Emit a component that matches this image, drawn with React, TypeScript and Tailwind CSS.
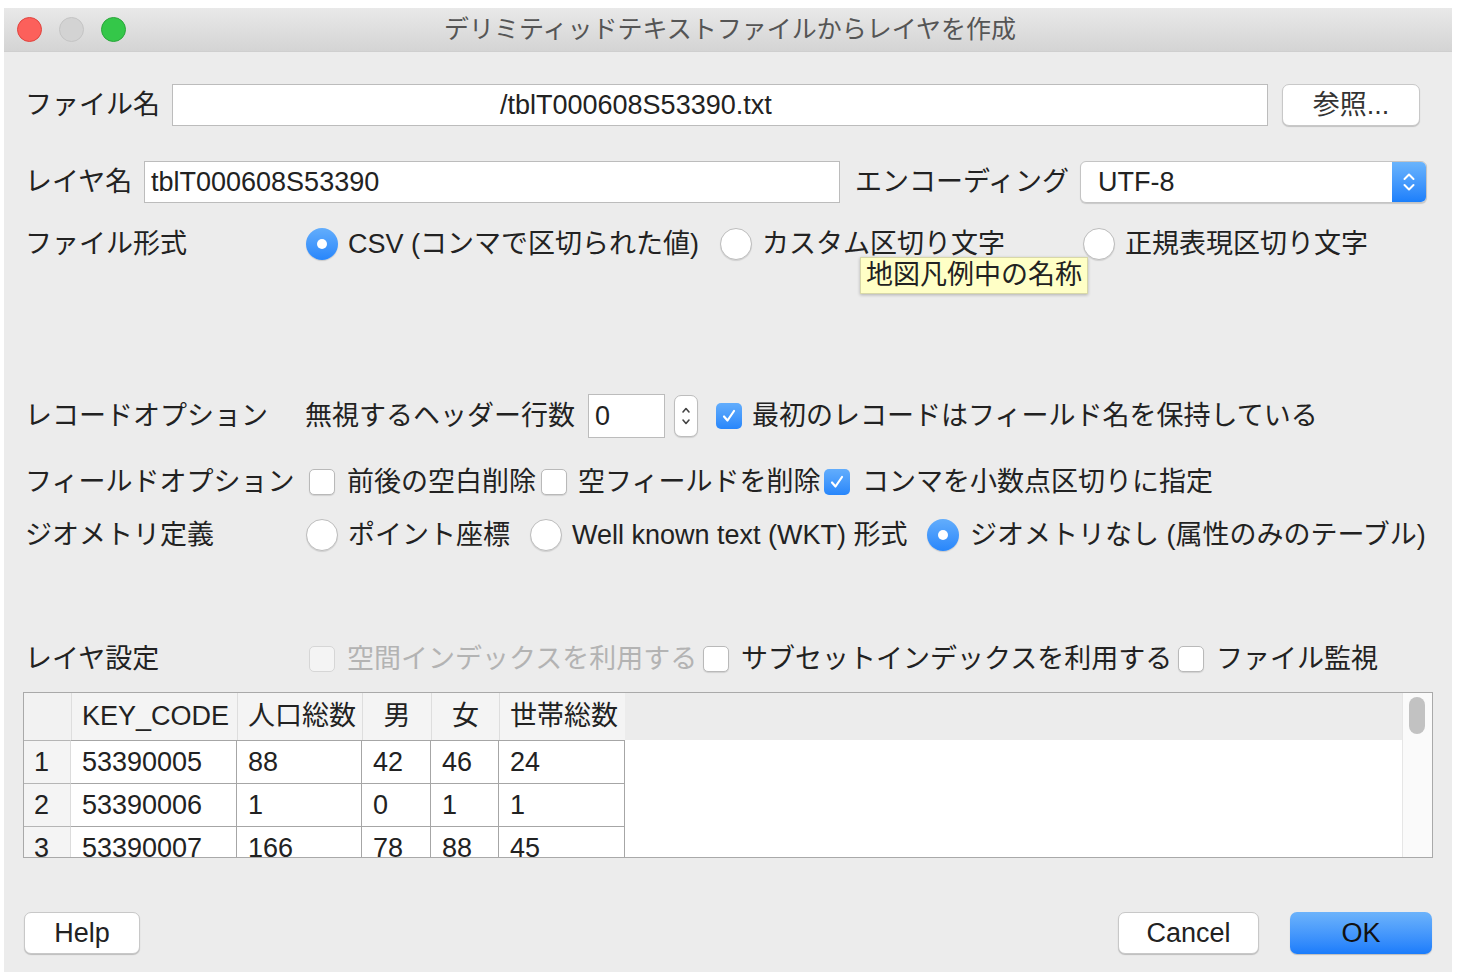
import React from 'react';

function Radio({ checked }: { checked?: boolean }) {
  if (checked) {
    return (
      <span className="w-[32px] h-[32px] rounded-full bg-linear-to-b from-[#62adfc] to-[#2786fb] flex items-center justify-center shrink-0 shadow-[0_1px_1px_rgba(0,0,0,0.15)]">
        <span className="w-[10px] h-[10px] rounded-full bg-white" />
      </span>
    );
  }
  return (
    <span className="w-[32px] h-[32px] rounded-full bg-white border border-[#bdbdbd] shrink-0 shadow-[0_1px_1px_rgba(0,0,0,0.12)]" />
  );
}

function Check({ checked, disabled }: { checked?: boolean; disabled?: boolean }) {
  if (checked) {
    return (
      <span className="w-[26px] h-[26px] rounded-[5px] bg-linear-to-b from-[#62adfc] to-[#2786fb] flex items-center justify-center shrink-0">
        <svg width="18" height="18" viewBox="0 0 18 18">
          <path d="M4 9.5 L7.5 13.5 L14 4" fill="none" stroke="white" strokeWidth="2.2" strokeLinecap="round" strokeLinejoin="round" />
        </svg>
      </span>
    );
  }
  return (
    <span
      className={
        disabled
          ? 'w-[26px] h-[26px] rounded-[5px] bg-[#f4f4f4] border border-[#d6d6d6] shrink-0'
          : 'w-[26px] h-[26px] rounded-[5px] bg-white border border-[#b9b9b9] shrink-0 shadow-[0_1px_1px_rgba(0,0,0,0.12)]'
      }
    />
  );
}

const cols = [
  { w: 'w-[166px]', h: 'KEY_CODE', center: false },
  { w: 'w-[125px]', h: '人口総数', center: false },
  { w: 'w-[69px]', h: '男', center: true },
  { w: 'w-[68px]', h: '女', center: true },
  { w: 'w-[126px]', h: '世帯総数', center: false },
];

const rows = [
  ['1', '53390005', '88', '42', '46', '24'],
  ['2', '53390006', '1', '0', '1', '1'],
  ['3', '53390007', '166', '78', '88', '45'],
];

export default function App() {
  return (
    <div className="w-[1460px] h-[978px] bg-white pt-[8px] pl-[4px] font-['Liberation_Sans','Noto_Sans_CJK_JP',sans-serif] text-[27px] leading-none text-[#222]">
      <div className="relative w-[1448px] h-[964px] bg-[#ececec] flex flex-col">
        {/* Title bar */}
        <div className="relative h-[44px] shrink-0 bg-linear-to-b from-[#e9e9e9] to-[#d4d4d4] border-b border-[#cfcfcf] flex items-center justify-center">
          <div className="absolute left-[13px] top-[9px] flex gap-[17px]">
            <span className="w-[25px] h-[25px] rounded-full bg-[#fc605b] border border-[#e0443e]" />
            <span className="w-[25px] h-[25px] rounded-full bg-[#d3d3d3] border border-[#c4c4c4]" />
            <span className="w-[25px] h-[25px] rounded-full bg-[#34c749] border border-[#2aa63b]" />
          </div>
          <span className="text-[25px] text-[#555] ml-[4px]">デリミティッドテキストファイルからレイヤを作成</span>
        </div>

        {/* Body */}
        <div className="flex flex-col pl-[21px]">
          {/* Row 1 */}
          <div className="flex items-center h-[42px] mt-[32px]">
            <span className="w-[147px]">ファイル名</span>
            <div className="w-[1096px] h-[42px] bg-white border border-[#bcbcbc] flex items-center pl-[327px]">
              /tblT000608S53390.txt
            </div>
            <div className="ml-[14px] w-[138px] h-[42px] bg-white rounded-[7px] border border-[#c8c8c8] shadow-[0_1px_1px_rgba(0,0,0,0.18)] flex items-center justify-center text-[#333]">
              参照...
            </div>
          </div>

          {/* Row 2 */}
          <div className="flex items-center h-[42px] mt-[35px]">
            <span className="w-[119px]">レイヤ名</span>
            <div className="w-[696px] h-[42px] bg-white border border-[#bcbcbc] flex items-center pl-[6px]">tblT000608S53390</div>
            <span className="ml-[15px] w-[225px]">エンコーディング</span>
            <div className="w-[347px] h-[42px] bg-white rounded-[6px] border border-[#c4c4c4] shadow-[0_1px_1px_rgba(0,0,0,0.15)] flex items-center overflow-hidden">
              <span className="flex-1 pl-[17px]">UTF-8</span>
              <span className="w-[34px] h-full bg-linear-to-b from-[#6ab4fc] to-[#1b7ffb] flex items-center justify-center">
                <svg width="16" height="24" viewBox="0 0 16 24">
                  <path d="M3.5 9 L8 4.5 L12.5 9" fill="none" stroke="white" strokeWidth="2" strokeLinecap="round" strokeLinejoin="round" />
                  <path d="M3.5 15 L8 19.5 L12.5 15" fill="none" stroke="white" strokeWidth="2" strokeLinecap="round" strokeLinejoin="round" />
                </svg>
              </span>
            </div>
          </div>

          {/* Row 3 */}
          <div className="flex items-center h-[32px] mt-[25px]">
            <span className="w-[281px]">ファイル形式</span>
            <div className="w-[414px] flex items-center">
              <Radio checked />
              <span className="ml-[10px]">CSV (コンマで区切られた値)</span>
            </div>
            <div className="w-[363px] flex items-center">
              <Radio />
              <span className="ml-[10px]">カスタム区切り文字</span>
            </div>
            <div className="flex items-center">
              <Radio />
              <span className="ml-[10px]">正規表現区切り文字</span>
            </div>
          </div>

          {/* Row 4 */}
          <div className="flex items-center h-[44px] mt-[134px]">
            <span className="w-[280px]">レコードオプション</span>
            <span className="w-[283px]">無視するヘッダー行数</span>
            <div className="w-[77px] h-[44px] bg-white border border-[#bcbcbc] flex items-center pl-[6px]">0</div>
            <div className="ml-[9px] w-[24px] h-[42px] bg-white rounded-[7px] border border-[#bdbdbd] shadow-[0_1px_1px_rgba(0,0,0,0.12)] flex items-center justify-center">
              <svg width="12" height="30" viewBox="0 0 12 30">
                <path d="M3 11 L6 7.5 L9 11" fill="none" stroke="#444" strokeWidth="1.6" strokeLinecap="round" strokeLinejoin="round" />
                <path d="M3 19 L6 22.5 L9 19" fill="none" stroke="#444" strokeWidth="1.6" strokeLinecap="round" strokeLinejoin="round" />
              </svg>
            </div>
            <span className="ml-[18px]">
              <Check checked />
            </span>
            <span className="ml-[10px]">最初のレコードはフィールド名を保持している</span>
          </div>

          {/* Row 5 */}
          <div className="flex items-center h-[30px] mt-[29px]">
            <span className="w-[284px]">フィールドオプション</span>
            <div className="w-[232px] flex items-center">
              <Check />
              <span className="ml-[12px]">前後の空白削除</span>
            </div>
            <div className="w-[283px] flex items-center">
              <Check />
              <span className="ml-[11px]">空フィールドを削除</span>
            </div>
            <div className="flex items-center">
              <Check checked />
              <span className="ml-[12px]">コンマを小数点区切りに指定</span>
            </div>
          </div>

          {/* Row 6 */}
          <div className="flex items-center h-[32px] mt-[22px]">
            <span className="w-[281px]">ジオメトリ定義</span>
            <div className="w-[224px] flex items-center">
              <Radio />
              <span className="ml-[10px]">ポイント座標</span>
            </div>
            <div className="w-[397px] flex items-center">
              <Radio />
              <span className="ml-[10px]">Well known text (WKT) 形式</span>
            </div>
            <div className="flex items-center">
              <Radio checked />
              <span className="ml-[11px]">ジオメトリなし (属性のみのテーブル)</span>
            </div>
          </div>

          {/* Row 7 */}
          <div className="flex items-center h-[30px] mt-[93px]">
            <span className="w-[284px]">レイヤ設定</span>
            <div className="w-[394px] flex items-center">
              <Check disabled />
              <span className="ml-[12px] text-[#b3b3b3]">空間インデックスを利用する</span>
            </div>
            <div className="w-[475px] flex items-center">
              <Check />
              <span className="ml-[12px]">サブセットインデックスを利用する</span>
            </div>
            <div className="flex items-center">
              <Check />
              <span className="ml-[12px]">ファイル監視</span>
            </div>
          </div>

          {/* Table */}
          <div className="mt-[18px] -ml-[2px] w-[1410px] h-[166px] border border-[#a9a9a9] bg-white flex overflow-hidden">
            <div className="flex-1 flex flex-col">
              <div className="h-[47px] shrink-0 bg-[#ececec] flex">
                <div className="w-[47px] h-full bg-[#f2f2f2]" />
                {cols.map((c, i) => (
                  <div
                    key={i}
                    className={
                      c.w +
                      ' h-full bg-[#f4f4f4] border-l border-[#dedede] flex items-center ' +
                      (c.center ? 'justify-center' : 'pl-[10px]')
                    }
                  >
                    {c.h}
                  </div>
                ))}
              </div>
              {rows.map((r, ri) => (
                <div key={ri} className="h-[43px] shrink-0 flex">
                  <div className="w-[47px] h-full bg-[#f4f4f4] border-t border-[#b5b5b5] border-r border-r-[#dcdcdc] flex items-center pl-[10px]">
                    {r[0]}
                  </div>
                  {cols.map((c, ci) => (
                    <div
                      key={ci}
                      className={c.w + ' h-full border-t border-r border-[#a6a6a6] flex items-center pl-[11px]'}
                    >
                      {r[ci + 1]}
                    </div>
                  ))}
                </div>
              ))}
            </div>
            <div className="w-[30px] h-full bg-[#fafafa] border-l border-[#e6e6e6] pt-[4px] pl-[6px]">
              <div className="w-[16px] h-[37px] rounded-full bg-[#c2c2c2]" />
            </div>
          </div>

          {/* Buttons */}
          <div className="mt-[54px] flex items-center pr-[20px] -ml-[1px]">
            <div className="w-[116px] h-[42px] bg-white rounded-[7px] border border-[#c8c8c8] shadow-[0_1px_1px_rgba(0,0,0,0.2)] flex items-center justify-center">
              Help
            </div>
            <div className="flex-1" />
            <div className="w-[141px] h-[42px] bg-white rounded-[7px] border border-[#c8c8c8] shadow-[0_1px_1px_rgba(0,0,0,0.2)] flex items-center justify-center">
              Cancel
            </div>
            <div className="ml-[31px] w-[142px] h-[42px] rounded-[7px] bg-linear-to-b from-[#6cb3fb] to-[#1a7cfb] shadow-[0_1px_1px_rgba(0,0,0,0.2)] flex items-center justify-center text-[#111]">
              OK
            </div>
          </div>
        </div>

        {/* Tooltip */}
        <div className="absolute left-[856px] top-[249px] h-[37px] px-[5px] bg-[#ffffc6] border border-[#d8d8a8] shadow-[0_1px_3px_rgba(0,0,0,0.25)] flex items-center">
          地図凡例中の名称
        </div>
      </div>
    </div>
  );
}
